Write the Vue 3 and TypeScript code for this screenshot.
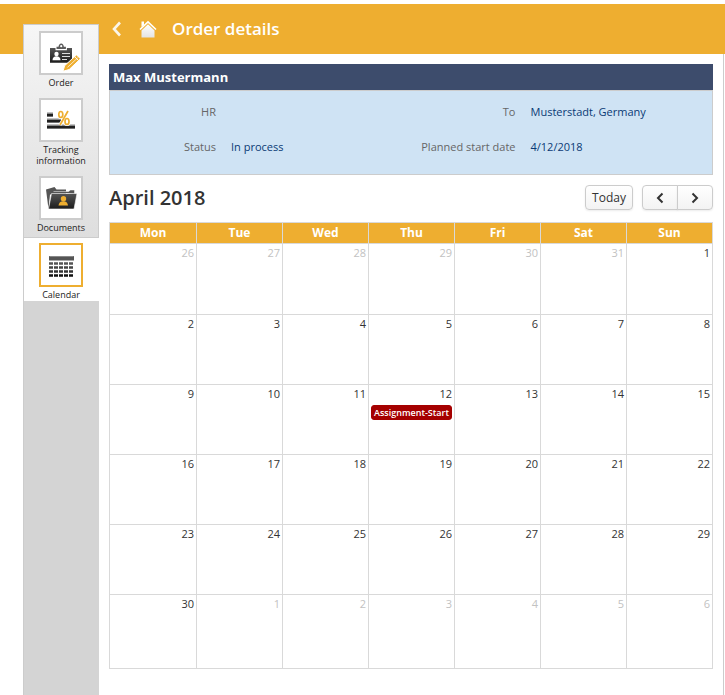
<script setup lang="ts">
interface Day {
  label: number
  outside: boolean
  event?: string
}

const weekdays = ['Mon', 'Tue', 'Wed', 'Thu', 'Fri', 'Sat', 'Sun']

const weeks: Day[][] = Array.from({ length: 6 }, (_, w) =>
  Array.from({ length: 7 }, (_, d) => {
    const n = w * 7 + d - 5
    if (n < 1) return { label: n + 31, outside: true }
    if (n > 30) return { label: n - 30, outside: true }
    return { label: n, outside: false, event: n === 12 ? 'Assignment-Start' : undefined }
  }),
)

const leftFields = [
  { name: 'HR', value: '' },
  { name: 'Status', value: 'In process' },
]
const rightFields = [
  { name: 'To', value: 'Musterstadt, Germany' },
  { name: 'Planned start date', value: '4/12/2018' },
]
</script>

<template>
  <div class="page">
    <header class="topbar">
      <a class="back" href="#" aria-label="Back">
        <svg width="10" height="16" viewBox="0 0 10 16"><path d="M8 1.500 2 8l6 6.500" fill="none" stroke="#fbf6ea" stroke-width="2.600" /></svg>
      </a>
      <a class="home" href="#" aria-label="Home">
        <svg width="18" height="18" viewBox="0 0 18 18">
          <defs>
            <linearGradient id="homeFill" x1="0" y1="0" x2="0" y2="1">
              <stop offset="0" stop-color="#fff" />
              <stop offset="1" stop-color="#e4e4e4" />
            </linearGradient>
          </defs>
          <path d="M2.500 10.500 9 4.300l6.500 6.200V17.500h-13z" fill="url(#homeFill)" />
          <path d="M1 9.500 9 1.800 17 9.500" fill="none" stroke="#fff" stroke-width="1.600" />
          <path d="M2.500 1.500H5v3.200L2.500 7z" fill="#fff" />
        </svg>
      </a>
      <h1>Order details</h1>
    </header>

    <div class="body">
      <nav class="sidebar">
        <div class="upper">
          <a class="item" href="#">
            <span class="tile">
              <svg width="40" height="40" viewBox="0 0 40 40">
                <defs>
                  <linearGradient id="dark" x1="0" y1="0" x2="0" y2="1">
                    <stop offset="0" stop-color="#555" />
                    <stop offset="1" stop-color="#1c1c1c" />
                  </linearGradient>
                </defs>
                <path d="M15.500 16v-2.300h2c.2-1.900 1.200-3.200 2.700-3.200s2.500 1.300 2.700 3.200h2V16z" fill="#5c5c5c" />
                <circle cx="20.200" cy="13.200" r="1.100" fill="#fff" />
                <path d="M9 15h5.500v2.200h11.400V15H31v14.700H9z" fill="url(#dark)" />
                <circle cx="15.500" cy="21" r="2.200" fill="#fff" />
                <path d="M11.500 27.200c0-2.700 1.600-4 4-4s4 1.300 4 4z" fill="#fff" />
                <path d="M21 20.500h8M21 23.500h8M21 26.500h5" stroke="#ddd" stroke-width="1.200" />
                <path d="m22 38.300 1.600-5.600L35.500 21.900l4 3.900-11.300 10.700z" fill="#eeae30" stroke="#fff" stroke-width="1" />
                <path d="m26.500 34.300 10.300-9.600" stroke="#fff" stroke-width=".7" />
                <path d="m33.500 23.500 4.200 4.200" stroke="#fff" stroke-width=".9" />
              </svg>
            </span>
            <span class="caption">Order</span>
          </a>
          <a class="item" href="#">
            <span class="tile">
              <svg width="40" height="40" viewBox="0 0 40 40">
                <path d="M6 12.500h6v4H6zM6 18.500h14v4H6zM6 24.500h28v4H6z" fill="#888" />
                <path d="M6 14h6v2.500H6zM6 20h14v2.500H6zM6 26h28v2.500H6z" fill="#202020" />
                <g fill="none" stroke="#fff" stroke-width="3.200">
                  <ellipse cx="19.800" cy="14.500" rx="2" ry="3" /><ellipse cx="26" cy="21.500" rx="2" ry="3" />
                  <path d="m27 11-8 14" />
                </g>
                <g fill="none" stroke="#eeae30" stroke-width="1.700">
                  <ellipse cx="19.800" cy="14.500" rx="2" ry="3" /><ellipse cx="26" cy="21.500" rx="2" ry="3" />
                  <path d="m27 11-8 14" />
                </g>
              </svg>
            </span>
            <span class="caption">Tracking information</span>
          </a>
          <a class="item" href="#">
            <span class="tile">
              <svg width="40" height="40" viewBox="0 0 40 40">
                <path d="M5 11.500 13.500 9l2 2.500H25v5H9L7.500 31z" fill="#555" />
                <path d="M12.500 13.500h15l2-1.500h4v4" fill="#555" stroke="#fff" stroke-width=".5" />
                <path d="M10.500 15.500H36L33 31H7.500z" fill="url(#dark)" stroke="#fff" stroke-width=".6" />
                <circle cx="22.500" cy="20.700" r="2.700" fill="#eeae30" />
                <path d="M17.500 27.500c.3-2.700 2-4.200 4.800-4.200s4.400 1.500 4.700 4.200z" fill="#eeae30" />
              </svg>
            </span>
            <span class="caption">Documents</span>
          </a>
        </div>
        <a class="item active" href="#" aria-current="page">
          <span class="tile">
            <svg width="40" height="40" viewBox="0 0 40 40">
              <path d="M8 11h25v4.500H8z" fill="#555" />
              <path d="M8.500 11.500h24" stroke="#888" stroke-width="1" />
              <g stroke-dasharray="4 1" stroke-width="2.400">
                <path d="M8 18.500h25" stroke="#555" />
                <path d="M8 22.500h25" stroke="#444" />
                <path d="M8 26.500h25" stroke="#333" />
                <path d="M8 30.500h25" stroke="#111" />
              </g>
            </svg>
          </span>
          <span class="caption">Calendar</span>
        </a>
      </nav>

      <main class="content">
        <section class="panel">
          <h2>Max Mustermann</h2>
          <div class="fields">
            <dl>
              <div v-for="f in leftFields" :key="f.name" class="field">
                <dt>{{ f.name }}</dt>
                <dd>{{ f.value }}</dd>
              </div>
            </dl>
            <dl>
              <div v-for="f in rightFields" :key="f.name" class="field">
                <dt>{{ f.name }}</dt>
                <dd>{{ f.value }}</dd>
              </div>
            </dl>
          </div>
        </section>

        <div class="toolbar">
          <h2>April 2018</h2>
          <button type="button" class="btn">Today</button>
          <div class="group">
            <button type="button" class="btn" aria-label="Previous month">
              <svg width="8" height="12" viewBox="0 0 8 12"><path d="M6.500 1.500 2 6l4.500 4.500" fill="none" stroke="#333" stroke-width="2" /></svg>
            </button>
            <button type="button" class="btn" aria-label="Next month">
              <svg width="8" height="12" viewBox="0 0 8 12"><path d="M1.500 1.500 6 6l-4.500 4.500" fill="none" stroke="#333" stroke-width="2" /></svg>
            </button>
          </div>
        </div>

        <table class="calendar">
          <thead>
            <tr>
              <th v-for="d in weekdays" :key="d" scope="col">{{ d }}</th>
            </tr>
          </thead>
          <tbody>
            <tr v-for="(week, i) in weeks" :key="i">
              <td v-for="(day, j) in week" :key="j" :class="{ outside: day.outside }">
                <span class="num">{{ day.label }}</span>
                <a v-if="day.event" class="event" href="#">{{ day.event }}</a>
              </td>
            </tr>
          </tbody>
        </table>
      </main>
    </div>
  </div>
</template>

<style>
body {
  background: #fff;
}
</style>

<style scoped>
.page {
  box-sizing: border-box;
  min-height: 100vh;
  padding-top: 4px;
  display: flex;
  flex-direction: column;
  font-family: 'Trebuchet MS', 'Open Sans', 'Noto Sans', sans-serif;
  font-size: 11px;
  line-height: 15px;
  color: #333;
}
h1,
h2,
dl,
dd {
  margin: 0;
}
a {
  color: inherit;
  text-decoration: none;
}
svg {
  display: block;
}
.topbar {
  display: flex;
  align-items: center;
  height: 50px;
  padding-left: 112px;
  background: #eeae30;
}
.home {
  margin-left: 17px;
}
.topbar h1 {
  margin-left: 15px;
  font-size: 17px;
  line-height: 24px;
  font-weight: 600;
  color: #fff;
}
.body {
  flex: 1;
  display: flex;
  margin-right: 1px;
  border-right: 1px solid #ccc;
}
.sidebar {
  box-sizing: border-box;
  flex: none;
  width: 76px;
  margin: -30px 0 0 23px;
  border-left: 1px solid #ccc;
  background: #d4d4d4;
}
.upper {
  border: 1px solid #ccc;
  border-left: 0;
  background: linear-gradient(#f6f6f6, #dedede);
}
.item {
  display: flex;
  flex-direction: column;
  align-items: center;
  gap: 2px;
  padding: 6px 0 4px;
}
.tile {
  border: 2px solid #ccc;
  background: #fff;
}
.caption {
  font-size: 9px;
  line-height: 11px;
  text-align: center;
  color: #222;
}
.active {
  padding: 5px 1px 1px 0;
  background: #fff;
}
.active .tile {
  border-color: #eeae30;
}
.content {
  flex: 1;
  padding: 10px;
}
.panel h2 {
  padding-left: 4px;
  font-size: 13px;
  line-height: 26px;
  color: #fff;
  background: #3d4c6c;
}
.fields {
  display: grid;
  grid-template-columns: 1fr 1fr;
  padding: 13px 3px 20px 0;
  border: 1px solid #ccc;
  background: #cfe3f4;
}
dl {
  display: grid;
  gap: 20px;
}
.field {
  display: grid;
  grid-template-columns: 106px 1fr;
  gap: 15px;
  height: 15px;
}
dt {
  text-align: right;
  white-space: nowrap;
  color: #666;
}
dd {
  white-space: nowrap;
  color: #0a3a75;
}
.toolbar {
  display: flex;
  align-items: center;
  height: 25px;
  margin: 10px 0 12px;
}
.toolbar h2 {
  margin-right: auto;
  font-size: 20px;
  line-height: 24px;
  font-weight: 600;
}
.btn {
  display: flex;
  align-items: center;
  justify-content: center;
  height: 25px;
  width: 48px;
  padding: 0;
  border: 1px solid #ccc;
  border-radius: 4px;
  background: linear-gradient(#fff, #f3f3f3);
  box-shadow: 0 1px 2px rgba(0, 0, 0, 0.08);
  font: inherit;
  font-size: 12px;
  color: #333;
}
.group {
  display: flex;
  margin-left: 9px;
}
.group .btn {
  width: 36px;
}
.group .btn:first-child {
  border-radius: 4px 0 0 4px;
}
.group .btn:last-child {
  margin-left: -1px;
  border-radius: 0 4px 4px 0;
}
.calendar {
  width: 100%;
  table-layout: fixed;
  border-collapse: collapse;
}
th,
td {
  padding: 0;
  border: 1px solid #d9d9d9;
}
th {
  height: 20px;
  font-size: 12px;
  line-height: 20px;
  color: #fff;
  background: #eeae30;
}
th:first-child {
  width: 86px;
}
td {
  height: 69px;
  vertical-align: top;
}
tbody tr:first-child td {
  height: 70px;
}
tbody tr:last-child td {
  height: 73px;
}
.num {
  display: block;
  padding: 1px 2px 2px 0;
  text-align: right;
}
.outside {
  color: #c2c2c2;
}
.event {
  display: block;
  margin: 2px 2px 0;
  border: 1px solid #a50000;
  border-radius: 3px;
  background: #a50000;
  color: #fff;
  font-size: 9px;
  line-height: 13px;
  font-weight: 600;
  text-align: center;
  white-space: nowrap;
}
</style>
